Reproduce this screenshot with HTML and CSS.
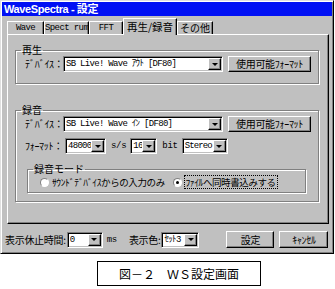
FILE: index.html
```html
<!DOCTYPE html>
<html lang="ja">
<head>
<meta charset="UTF-8" />
<title>WaveSpectra - 設定</title>
<link rel="stylesheet" href="styles.css">
</head>
<body>
  <div class="window">
    <div class="titlebar">WaveSpectra - 設定</div>

    <div class="tabs">
      <span class="tab t-wave">Wave</span>
      <span class="tab t-spec">Spect rum</span>
      <span class="tab t-fft">FFT</span>
      <span class="tab active">再生/録音</span>
      <span class="tab t-etc">その他</span>
    </div>

    <div class="panel">
      <!-- playback -->
      <fieldset class="group play">
        <legend>再生</legend>
        <div class="row">
          <span class="label">ﾃﾞﾊﾞｲｽ：</span>
          <div class="combo device"><span class="value">SB Live! Wave ｱｳﾄ [DF80]</span><span class="arrow"></span></div>
          <span class="btn fmt">使用可能ﾌｫｰﾏｯﾄ</span>
        </div>
      </fieldset>

      <!-- recording -->
      <fieldset class="group rec">
        <legend>録音</legend>
        <div class="row">
          <span class="label">ﾃﾞﾊﾞｲｽ：</span>
          <div class="combo device"><span class="value">SB Live! Wave ｲﾝ [DF80]</span><span class="arrow"></span></div>
          <span class="btn fmt">使用可能ﾌｫｰﾏｯﾄ</span>
        </div>
        <div class="row format">
          <span class="label wide">ﾌｫｰﾏｯﾄ：</span>
          <div class="combo rate"><span class="value">48000</span><span class="arrow"></span></div>
          <span class="unit">s/s</span>
          <div class="combo bits"><span class="value">16</span><span class="arrow"></span></div>
          <span class="unit">bit</span>
          <div class="combo chan"><span class="value">Stereo</span><span class="arrow"></span></div>
        </div>

        <fieldset class="group mode">
          <legend>録音モード</legend>
          <div class="radios">
            <span class="radio"><span class="dot"></span>ｻｳﾝﾄﾞﾃﾞﾊﾞｲｽからの入力のみ</span>
            <span class="radio checked"><span class="dot"></span><span class="focus">ﾌｧｲﾙへ同時書込みする</span></span>
          </div>
        </fieldset>
      </fieldset>
    </div>

    <div class="footer">
      <span class="label">表示休止時間:</span>
      <div class="combo pause"><span class="value">0</span><span class="arrow"></span></div>
      <span class="unit small">ms</span>
      <span class="label color">表示色:</span>
      <div class="combo colors"><span class="value">ｾｯﾄ3</span><span class="arrow"></span></div>
      <span class="btn ok">設定</span>
      <span class="btn cancel">ｷｬﾝｾﾙ</span>
    </div>
  </div>

  <div class="caption">図－２　ＷＳ設定画面</div>
</body>
</html>
```

FILE: styles.css
```css
/* Reset & base */
* {
  box-sizing: border-box;
}
body {
  margin: 0;
  background: #fff;
  font-family: "Noto Sans CJK JP", "DejaVu Sans", sans-serif;
  font-size: 10px;
  color: #000;
  width: 335px;
  height: 289px;
  overflow: hidden;
}
/* Dialog window */
.window {
  width: 334px;
  height: 254px;
  background: #c0c0c0;
  border: 1px solid #dfdfdf;
  border-right-color: #000;
  border-bottom-color: #000;
  box-shadow: inset 1px 1px #fff, inset -1px -1px #808080;
  padding: 1px 1px 0 1px;
  display: flex;
  flex-direction: column;
}
.titlebar {
  height: 14px;
  background: #0010f4;
  color: #fff;
  font-family: "Liberation Sans", "Noto Sans CJK JP", sans-serif;
  font-weight: 700;
  font-size: 11px;
  line-height: 14px;
  padding-left: 2px;
  letter-spacing: -0.4px;
  white-space: nowrap;
}
/* Tabs */
.tabs {
  display: flex;
  align-items: flex-end;
  height: 18px;
  padding-left: 5px;
  white-space: nowrap;
}
.tab {
  height: 13px;
  line-height: 12px;
  text-align: center;
  border-top: 1px solid #fff;
  border-left: 1px solid #fff;
  border-right: 1px solid #000;
  box-shadow: inset -1px 0 #808080;
  font-family: "Liberation Mono", "Noto Sans CJK JP", monospace;
  font-size: 9px;
  letter-spacing: -0.6px;
}
.t-wave { width: 37px; }
.t-spec { width: 45px; }
.t-fft { width: 34px; }
.t-etc {
  width: 36px;
  font-family: "Noto Sans CJK JP", sans-serif;
  font-size: 10px;
  letter-spacing: 0;
}
.tab.active {
  height: 17px;
  width: 54px;
  margin-bottom: -1px;
  line-height: 15px;
  background: #c0c0c0;
  position: relative;
  z-index: 1;
  font-family: "Noto Sans CJK JP", sans-serif;
  font-size: 10.5px;
  letter-spacing: 0;
}
/* Tab panel */
.panel {
  margin-left: 5px;
  width: 322px;
  height: 190px;
  border: 1px solid #fff;
  border-right-color: #000;
  border-bottom-color: #000;
  box-shadow: inset -1px -1px #808080;
  padding: 9px 0 0 7px;
}
/* Group boxes */
.group {
  margin: 0;
  border: 1px solid #808080;
  box-shadow: inset 1px 1px #fff, 1px 1px #fff;
  padding: 0 0 0 9px;
  min-width: 0;
}
.group legend {
  padding: 0 1px;
  margin-left: -4px;
  font-size: 10px;
  line-height: 12px;
  height: 12px;
}
.play {
  width: 304px;
  height: 40px;
}
.rec {
  margin-top: 20px;
  width: 304px;
  height: 98px;
}
.row {
  display: flex;
  align-items: center;
  height: 16px;
}
.row.format {
  margin-top: 6px;
}
.label {
  width: 38px;
  line-height: 12px;
  white-space: nowrap;
  letter-spacing: -0.3px;
}
.label.wide { width: 40px; }
/* Combo boxes */
.combo {
  height: 16px;
  background: #fff;
  border: 1px solid #808080;
  border-right-color: #fff;
  border-bottom-color: #fff;
  box-shadow: inset 1px 1px #000, inset -1px -1px #c0c0c0;
  display: flex;
  align-items: center;
  padding: 1px 1px 1px 2px;
}
.combo .value {
  flex: 1;
  min-width: 0;
  font-family: "Liberation Mono", "Noto Sans CJK JP", monospace;
  font-size: 9px;
  line-height: 12px;
  white-space: nowrap;
  overflow: hidden;
  letter-spacing: -0.7px;
}
.arrow {
  flex: none;
  width: 13px;
  height: 12px;
  background: #c0c0c0;
  border: 1px solid #fff;
  border-right-color: #000;
  border-bottom-color: #000;
  box-shadow: inset -1px -1px #808080;
  display: flex;
  align-items: center;
  justify-content: center;
}
.arrow::after {
  content: "";
  border-left: 3px solid transparent;
  border-right: 3px solid transparent;
  border-top: 3px solid #000;
}
.device { width: 160px; }
.rate { width: 41px; }
.bits { width: 27px; }
.chan { width: 46px; }
.chan .value { letter-spacing: -0.9px; }
.unit {
  font-family: "Liberation Mono", monospace;
  font-size: 9px;
  letter-spacing: -0.3px;
  margin: 0 4px 0 5px;
}
/* Buttons */
.btn {
  flex: none;
  height: 16px;
  background: #c0c0c0;
  border: 1px solid #fff;
  border-right-color: #000;
  border-bottom-color: #000;
  box-shadow: inset -1px -1px #808080;
  display: flex;
  align-items: center;
  justify-content: center;
  line-height: 12px;
  white-space: nowrap;
  letter-spacing: -0.3px;
}
.fmt {
  width: 83px;
  margin-left: 5px;
}
/* Recording mode */
.mode {
  margin: 9px 0 0 2px;
  width: 279px;
  height: 30px;
  padding-left: 12px;
}
.mode legend {
  margin-left: -7px;
}
.radios {
  display: flex;
  align-items: center;
  height: 14px;
  white-space: nowrap;
  font-size: 9.5px;
}
.radio {
  display: flex;
  align-items: center;
  width: 148px;
  line-height: 12px;
  letter-spacing: -0.4px;
}
.dot {
  flex: none;
  width: 9px;
  height: 9px;
  border-radius: 50%;
  background: #fff;
  border: 1px solid #808080;
  border-right-color: #fff;
  border-bottom-color: #fff;
  margin-right: 3px;
  display: flex;
  align-items: center;
  justify-content: center;
}
.radio.checked .dot::after {
  content: "";
  width: 3px;
  height: 3px;
  border-radius: 50%;
  background: #000;
}
.focus {
  outline: 1px dotted #000;
  padding: 0 1px;
}
/* Footer */
.footer {
  display: flex;
  align-items: center;
  height: 19px;
  margin-top: 6px;
  padding-left: 3px;
  white-space: nowrap;
}
.footer .label {
  width: auto;
  margin-right: 1px;
}
.pause { width: 36px; }
.colors { width: 38px; }
.unit.small { margin: 0 0 0 4px; }
.label.color { margin-left: 12px; }
.footer .btn {
  height: 17px;
}
.ok {
  width: 48px;
  margin-left: 27px;
}
.cancel {
  width: 49px;
  margin-left: 5px;
}
/* Caption */
.caption {
  margin: 7px 0 0 97px;
  width: 164px;
  height: 25px;
  border: 1px solid #000;
  text-align: center;
  line-height: 23px;
  font-size: 12px;
  white-space: nowrap;
}
```
